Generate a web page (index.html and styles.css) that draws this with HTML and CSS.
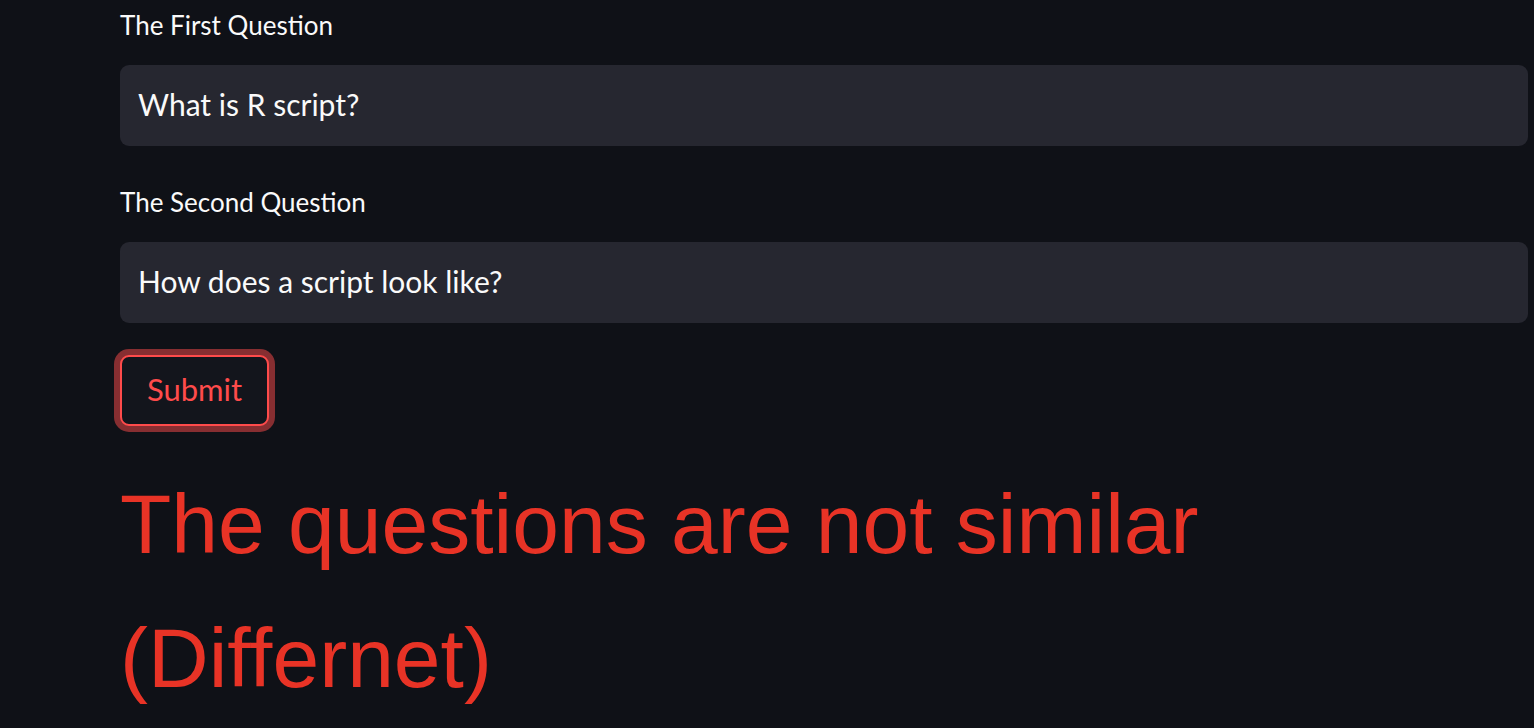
FILE: index.html
```html
<!DOCTYPE html>
<html>
<head>
<meta charset="utf-8">
<link rel="stylesheet" href="styles.css">
</head>
<body>
<main class="main">
  <div class="field">
    <label class="label">The First Question</label>
    <div class="input">What is R script?</div>
  </div>
  <div class="field">
    <label class="label">The Second Question</label>
    <div class="input">How does a script look like?</div>
  </div>
  <div class="btn-wrap">
    <button class="btn">Submit</button>
  </div>
  <p class="result">The questions are not similar (Differnet)</p>
</main>
</body>
</html>
```
FILE: styles.css
```css
html, body {
  margin: 0;
  padding: 0;
  background: #0f1117;
  height: 100%;
  overflow: hidden;
}
.main {
  padding: 7px 6px 0 120px;
  font-family: "Lato", "Noto Sans", sans-serif;
  color: #fafafa;
}
.field {
  display: flex;
  flex-direction: column;
}
.field + .field {
  margin-top: 38px;
}
.label {
  font-size: 26px;
  line-height: 36px;
  height: 36px;
  margin-bottom: 22px;
}
.input {
  height: 81px;
  box-sizing: border-box;
  background: #262730;
  border-radius: 9px;
  padding: 0 18px 3px;
  display: flex;
  align-items: center;
  font-size: 30px;
}
.btn-wrap {
  margin-top: 32px;
}
.btn {
  width: 149px;
  height: 71px;
  box-sizing: border-box;
  background: #13151c;
  border: 2px solid #ff4b4b;
  border-radius: 9px;
  box-shadow: 0 0 0 6px rgba(255, 75, 75, 0.5);
  color: #ff4b4b;
  font-family: "Lato", "Noto Sans", sans-serif;
  font-size: 31px;
  padding: 0 0 3px;
  cursor: pointer;
}
.result {
  margin: 31px 0 0 0;
  font-family: "Liberation Sans", Arial, sans-serif;
  font-size: 84px;
  line-height: 134px;
  color: #e83326;
  width: 1200px;
}
```
